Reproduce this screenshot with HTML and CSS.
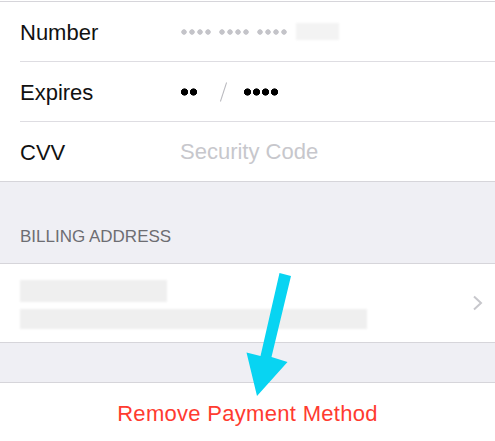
FILE: index.html
```html
<!DOCTYPE html>
<html lang="en">

<head>
  <meta charset="UTF-8">
  <meta name="viewport" content="width=device-width, initial-scale=1.0">
  <title>Payment Method</title>
  <link rel="stylesheet" href="styles.css">
</head>

<body>
  <div class="page">
    <!-- card fields -->
    <div class="group">
      <div class="row">
        <div class="label">Number</div>
        <div class="value">
          <span class="dots dots-small"></span>
          <span class="dots dots-small"></span>
          <span class="dots dots-small"></span>
          <span class="masked"></span>
        </div>
      </div>
      <div class="row">
        <div class="label">Expires</div>
        <div class="value">
          <span class="dots dots-big two"></span>
          <span class="slash"></span>
          <span class="dots dots-big four"></span>
        </div>
      </div>
      <div class="row">
        <div class="label">CVV</div>
        <div class="value placeholder">Security Code</div>
      </div>
    </div>

    <div class="section-header">BILLING ADDRESS</div>

    <div class="group">
      <div class="row address">
        <div class="address-lines">
          <span class="blur-line name"></span>
          <span class="blur-line street"></span>
        </div>
        <svg class="chevron" width="11" height="16" viewBox="0 0 11 16">
          <polyline points="2,1.5 9,8 2,14.5" fill="none" stroke="#c7c7cc" stroke-width="2" />
        </svg>
      </div>
    </div>

    <div class="spacer"></div>

    <div class="group bottom">
      <div class="remove">Remove Payment Method</div>
    </div>

    <!-- pointer arrow -->
    <svg class="arrow" width="495" height="441" viewBox="0 0 495 441">
      <polygon points="279.5,273 291,276 271.5,357 287.5,362 257,396 246.5,352.5 260.5,356" fill="#08d4f2" />
    </svg>
  </div>
</body>

</html>
```

FILE: styles.css
```css
* {
  margin: 0;
  padding: 0;
  box-sizing: border-box;
}

body {
  font-family: "Liberation Sans", Arial, sans-serif;
  background: #fff;
  color: #000;
}

.page {
  width: 495px;
  height: 441px;
  padding-top: 1px;
  position: relative;
  overflow: hidden;
}

.group {
  background: #fff;
  border-top: 1px solid #d6d5da;
  border-bottom: 1px solid #d6d5da;
}

.row {
  height: 60px;
  display: flex;
  align-items: center;
  margin-left: 20px;
  border-bottom: 1px solid #dedde2;
}

.row:last-child {
  border-bottom: none;
  height: 59px;
}

.label {
  width: 160px;
  font-size: 22px;
  color: #111;
  padding-top: 2px;
}

.value {
  display: flex;
  align-items: center;
  font-size: 22px;
}

.placeholder {
  color: #c7c7cc;
}

/* bullets drawn as a repeating dot */
.dots {
  display: inline-block;
}

.dots-small {
  width: 32px;
  height: 6px;
  margin-right: 6px;
  background: radial-gradient(circle, #c4c4c9 2.4px, transparent 3px) 0 0 / 8px 6px repeat-x;
}

.masked {
  width: 43px;
  height: 17px;
  margin-left: 2px;
  background: #f3f3f3;
  filter: blur(1px);
}

.dots-big {
  height: 8px;
  background: radial-gradient(circle, #000 3.3px, transparent 3.9px) 0 0 / 9px 8px repeat-x;
}

.dots-big.two {
  width: 18px;
}

.dots-big.four {
  width: 36px;
}

.slash {
  width: 1px;
  height: 20px;
  margin: 0 19px 0 25px;
  background: #b9b9be;
  transform: rotate(18deg);
}

.section-header {
  height: 81px;
  background: #efeff4;
  padding: 45px 0 0 20px;
  font-size: 17px;
  color: #6d6d72;
}

.row.address {
  height: 78px;
  justify-content: space-between;
  padding-right: 12px;
}

.address-lines {
  display: flex;
  flex-direction: column;
  gap: 7px;
  padding-top: 2px;
}

.blur-line {
  display: block;
  height: 21px;
  background: #efefef;
  filter: blur(1px);
}

.blur-line.name {
  width: 147px;
  height: 22px;
}

.blur-line.street {
  width: 347px;
  height: 20px;
}

.spacer {
  height: 39px;
  background: #efeff4;
}

.group.bottom {
  border-bottom: none;
  height: 60px;
  display: flex;
  justify-content: center;
  padding-top: 18px;
}

.remove {
  font-size: 22px;
  color: #ff3b30;
  letter-spacing: 0.3px;
}

.arrow {
  position: absolute;
  top: 0;
  left: 0;
}
```
